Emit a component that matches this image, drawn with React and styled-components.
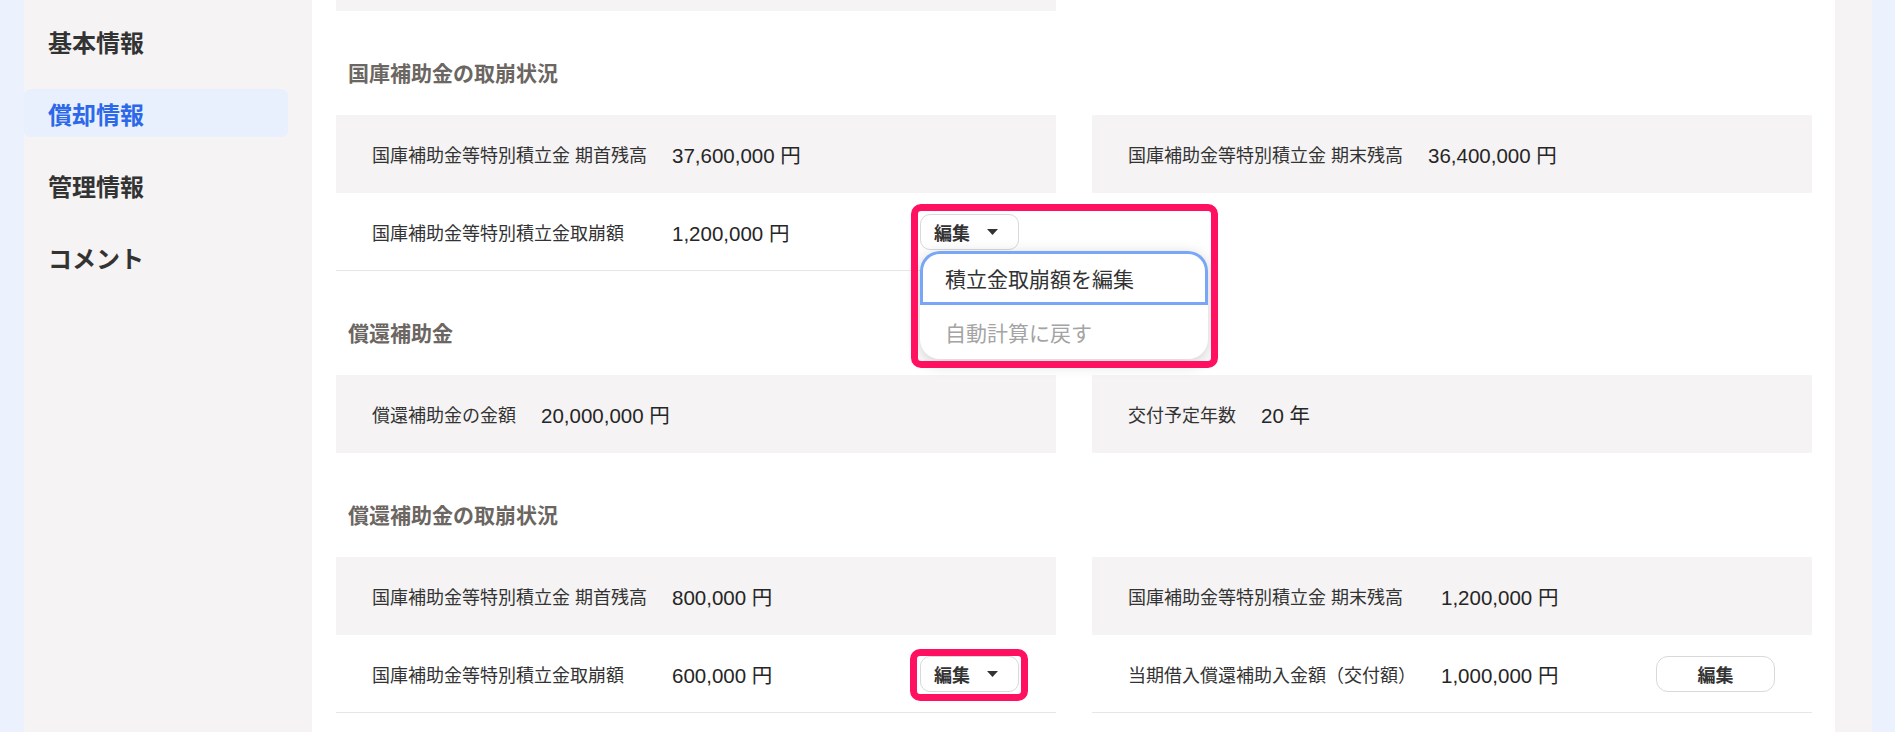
import React from 'react'
import styled, { createGlobalStyle } from 'styled-components'

const GlobalStyle = createGlobalStyle`
  html, body {
    margin: 0;
    padding: 0;
  }
  body {
    background: #ebf2fd;
    font-family: "Liberation Sans", "Noto Sans CJK JP", sans-serif;
    color: #333;
  }
`

const Page = styled.div`
  display: flex;
  height: 732px;
  margin: 0 23px 0 24px;
  overflow: hidden;
`

const Sidebar = styled.nav`
  width: 288px;
  flex-shrink: 0;
  box-sizing: border-box;
  padding: 17px 24px 0 0;
  background: #f5f3f4;
  display: flex;
  flex-direction: column;
  gap: 24px;
`

const NavItem = styled.a`
  display: flex;
  align-items: center;
  height: 48px;
  padding-left: 24px;
  border-radius: 6px;
  font-size: 24px;
  font-weight: 700;
  text-decoration: none;
  color: ${p => (p.$active ? '#2c68e8' : '#333')};
  background: ${p => (p.$active ? '#e8f0fd' : 'transparent')};
`

const Main = styled.main`
  flex: 1;
  background: #fff;
  padding: 0 23px 0 24px;
`

const RightRail = styled.div`
  width: 37px;
  flex-shrink: 0;
  background: #f5f3f4;
`

const Section = styled.section`
  display: grid;
  grid-template-columns: 720px 720px;
  column-gap: 36px;
  align-items: start;
  padding-top: ${p => (p.$first ? 0 : 50)}px;
`

const PrevTail = styled.div`
  height: 11px;
  background: #f5f3f4;
`

const SectionTitle = styled.h2`
  grid-column: 1 / -1;
  margin: 0 0 28px;
  padding-left: 12px;
  font-size: 21px;
  line-height: 26px;
  font-weight: 700;
  color: #6b6661;
`

const Table = styled.table`
  width: 100%;
  border-collapse: separate;
  border-spacing: 0;
`

const Row = styled.tr`
  background: ${p => (p.$shaded ? '#f5f3f4' : '#fff')};
`

const Cell = styled.td`
  box-sizing: border-box;
  height: 78px;
  padding: 0;
  vertical-align: middle;
  white-space: nowrap;
  border-bottom: ${p => (p.$line ? '1px solid #e6e6e6' : 'none')};
`

const Label = styled(Cell)`
  padding: 0 25px 0 36px;
  font-size: 18px;
  color: #333;
`

const Value = styled(Cell)`
  width: 100%;
  font-size: 20.5px;
  color: #262626;
`

const Action = styled(Cell)`
  padding-right: 37px;
  text-align: right;
`

const Dropdown = styled.div`
  position: relative;
  display: inline-block;
  vertical-align: middle;
`

const EditButton = styled.button`
  display: inline-flex;
  align-items: center;
  justify-content: ${p => (p.$caret ? 'space-between' : 'center')};
  box-sizing: border-box;
  width: ${p => (p.$caret ? 99 : 119)}px;
  height: 36px;
  padding: ${p => (p.$caret ? '0 20px 0 13px' : '0')};
  border: 1px solid #d9d9d9;
  border-radius: ${p => (p.$caret ? 10 : 12)}px;
  background: #fff;
  font-family: "Liberation Sans", "Noto Sans CJK JP", sans-serif;
  font-size: 18px;
  font-weight: 700;
  color: #333;
  vertical-align: middle;
`

const Menu = styled.ul`
  position: absolute;
  top: calc(100% + 1px);
  left: 0;
  z-index: 2;
  width: 288px;
  margin: 0;
  padding: 0;
  list-style: none;
  text-align: left;
  background: #fff;
  border-radius: 20px;
  box-shadow: 0 4px 16px rgba(0, 0, 0, 0.2);
`

const MenuItem = styled.li`
  display: flex;
  align-items: center;
  height: 54px;
  padding-left: 25px;
  font-size: 21px;
  color: ${p => (p.$disabled ? '#a4a4a4' : '#333')};
  border-radius: ${p => (p.$focused ? '20px 20px 0 0' : '0')};
  box-shadow: ${p => (p.$focused ? 'inset 0 0 0 3px #79a6f6' : 'none')};
`

const Highlight = styled.span`
  position: absolute;
  z-index: 3;
  top: ${p => p.$top}px;
  left: ${p => p.$left}px;
  width: ${p => p.$w}px;
  height: ${p => p.$h}px;
  box-sizing: border-box;
  border: 7px solid #ff1060;
  border-radius: 10px;
  pointer-events: none;
`

const Caret = () => (
  <svg width="11" height="6" viewBox="0 0 11 6">
    <polygon points="0,0 11,0 5.5,6" fill="#333" />
  </svg>
)

const EditMenu = ({ open, mark }) => (
  <Dropdown>
    <EditButton $caret>
      <span>編集</span>
      <Caret />
    </EditButton>
    {open && (
      <Menu>
        <MenuItem $focused>積立金取崩額を編集</MenuItem>
        <MenuItem $disabled>自動計算に戻す</MenuItem>
      </Menu>
    )}
    {mark && open && <Highlight $top={-10} $left={-9} $w={307} $h={164} />}
    {mark && !open && <Highlight $top={-7} $left={-10} $w={118} $h={52} />}
  </Dropdown>
)

const DataTable = ({ rows }) => (
  <Table>
    <tbody>
      {rows.map((r, i) => (
        <Row key={i} $shaded={i === 0}>
          <Label $line={i > 0}>{r.label}</Label>
          <Value $line={i > 0}>{r.value}</Value>
          <Action $line={i > 0}>{r.action}</Action>
        </Row>
      ))}
    </tbody>
  </Table>
)

const navItems = ['基本情報', '償却情報', '管理情報', 'コメント']

export default function App() {
  return (
    <>
      <GlobalStyle />
      <Page>
        <Sidebar>
          {navItems.map(n => (
            <NavItem key={n} $active={n === '償却情報'}>
              {n}
            </NavItem>
          ))}
        </Sidebar>
        <Main>
          <Section $first>
            <PrevTail />
          </Section>

          <Section>
            <SectionTitle>国庫補助金の取崩状況</SectionTitle>
            <DataTable
              rows={[
                { label: '国庫補助金等特別積立金 期首残高', value: '37,600,000 円' },
                {
                  label: '国庫補助金等特別積立金取崩額',
                  value: '1,200,000 円',
                  action: <EditMenu open mark />,
                },
              ]}
            />
            <DataTable rows={[{ label: '国庫補助金等特別積立金 期末残高', value: '36,400,000 円' }]} />
          </Section>

          <Section>
            <SectionTitle>償還補助金</SectionTitle>
            <DataTable rows={[{ label: '償還補助金の金額', value: '20,000,000 円' }]} />
            <DataTable rows={[{ label: '交付予定年数', value: '20 年' }]} />
          </Section>

          <Section>
            <SectionTitle>償還補助金の取崩状況</SectionTitle>
            <DataTable
              rows={[
                { label: '国庫補助金等特別積立金 期首残高', value: '800,000 円' },
                {
                  label: '国庫補助金等特別積立金取崩額',
                  value: '600,000 円',
                  action: <EditMenu mark />,
                },
              ]}
            />
            <DataTable
              rows={[
                { label: '国庫補助金等特別積立金 期末残高', value: '1,200,000 円' },
                {
                  label: '当期借入償還補助入金額（交付額）',
                  value: '1,000,000 円',
                  action: <EditButton>編集</EditButton>,
                },
              ]}
            />
          </Section>
        </Main>
        <RightRail />
      </Page>
    </>
  )
}
